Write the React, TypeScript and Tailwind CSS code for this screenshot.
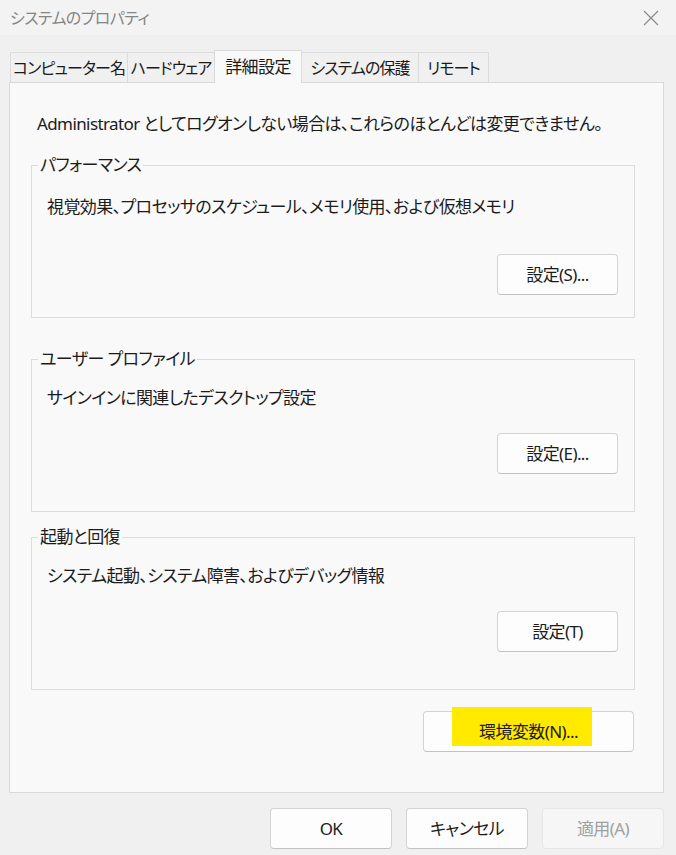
import React from "react";

interface Tab {
  label: string;
  width: string;
  active?: boolean;
}

interface Group {
  title: string;
  desc: string;
  button: string;
  spacing: string;
  descMargin: string;
  buttonMargin: string;
}

const tabs: Tab[] = [
  { label: "コンピューター名", width: "w-[118px]" },
  { label: "ハードウェア", width: "w-[88px]" },
  { label: "詳細設定", width: "w-[88px]", active: true },
  { label: "システムの保護", width: "w-[118px]" },
  { label: "リモート", width: "w-[71px]" },
];

const groups: Group[] = [
  {
    title: "パフォーマンス",
    desc: "視覚効果、プロセッサのスケジュール、メモリ使用、および仮想メモリ",
    button: "設定(S)...",
    spacing: "mt-[19px]",
    descMargin: "mt-[20px]",
    buttonMargin: "mt-[36px]",
  },
  {
    title: "ユーザー プロファイル",
    desc: "サインインに関連したデスクトップ設定",
    button: "設定(E)...",
    spacing: "mt-[30px]",
    descMargin: "mt-[17px]",
    buttonMargin: "mt-[24px]",
  },
  {
    title: "起動と回復",
    desc: "システム起動、システム障害、およびデバッグ情報",
    button: "設定(T)",
    spacing: "mt-[14px]",
    descMargin: "mt-[17px]",
    buttonMargin: "mt-[24px]",
  },
];

const btn =
  "h-[41px] rounded-[4px] border border-[#d3d3d3] border-b-[#c2c2c2] bg-[#fdfdfd] text-[#1b1b1b] flex items-center justify-center";

const App: React.FC = () => {
  return (
    <div className="w-[676px] h-[855px] overflow-hidden bg-[#f0f0f0] text-[17px] leading-[22px] tracking-[-0.6px] whitespace-nowrap text-[#1b1b1b] font-['Noto_Sans','Noto_Sans_CJK_JP',sans-serif] [font-feature-settings:'palt']">
      {/* Title bar */}
      <div className="h-[35px] bg-[#f3f3f3] flex items-center justify-between pl-[10px] pr-[16px]">
        <span className="text-[#858585] text-[16px]">システムのプロパティ</span>
        <svg width="18" height="18" viewBox="0 0 18 18" className="text-[#8a8a8a]">
          <path d="M2 2 L16 16 M16 2 L2 16" stroke="currentColor" strokeWidth="1.2" fill="none" />
        </svg>
      </div>

      {/* Tabs */}
      <div className="relative z-10 mt-[15px] h-[32px] flex items-end pl-[10px] text-[16px] tracking-[-0.9px]">
        {tabs.map((tab, i) =>
          tab.active ? (
            <div
              key={tab.label}
              className={`${tab.width} shrink-0 h-[33px] -mb-px -ml-px border border-b-0 border-[#d9d9d9] bg-[#f9f9f9] flex items-center justify-center text-[17px] tracking-[-0.6px]`}
            >
              {tab.label}
            </div>
          ) : (
            <div
              key={tab.label}
              className={`${tab.width} shrink-0 h-[30px] ${i > 0 ? "-ml-px" : ""} border border-b-0 border-[#dcdcdc] bg-[#f0f0f0] flex items-center justify-center`}
            >
              {tab.label}
            </div>
          )
        )}
      </div>

      {/* Panel */}
      <div className="ml-[9px] w-[655px] h-[711px] border border-[#d9d9d9] bg-[#f9f9f9]">
        <p className="pl-[27px] pt-[30px]">Administrator としてログオンしない場合は、これらのほとんどは変更できません。</p>

        {groups.map((g) => (
          <fieldset
            key={g.title}
            className={`${g.spacing} ml-[21px] w-[604px] h-[164px] border border-[#dcdcdc]`}
          >
            <legend className="ml-[6px] px-[2px]">{g.title}</legend>
            <p className={`${g.descMargin} pl-[15px]`}>{g.desc}</p>
            <div className={`${g.buttonMargin} flex justify-end pr-[16px]`}>
              <button className={`${btn} w-[121px]`}>{g.button}</button>
            </div>
          </fieldset>
        ))}

        <div className="mt-[21px] flex justify-end pr-[29px]">
          <button className={`${btn} relative w-[211px]`}>
            <span className="absolute left-[28px] top-[-5px] w-[140px] h-[39px] bg-[#ffea00]" />
            <span className="relative">環境変数(N)...</span>
          </button>
        </div>
      </div>

      {/* Dialog buttons */}
      <div className="mt-[15px] flex justify-end gap-[14px] pr-[12px]">
        <button className={`${btn} w-[122px]`}>OK</button>
        <button className={`${btn} w-[122px]`}>キャンセル</button>
        <button className="w-[122px] h-[41px] rounded-[4px] border border-[#e6e6e6] bg-[#f6f6f6] text-[#a0a0a0] flex items-center justify-center">
          適用(A)
        </button>
      </div>
    </div>
  );
};

export default App;
